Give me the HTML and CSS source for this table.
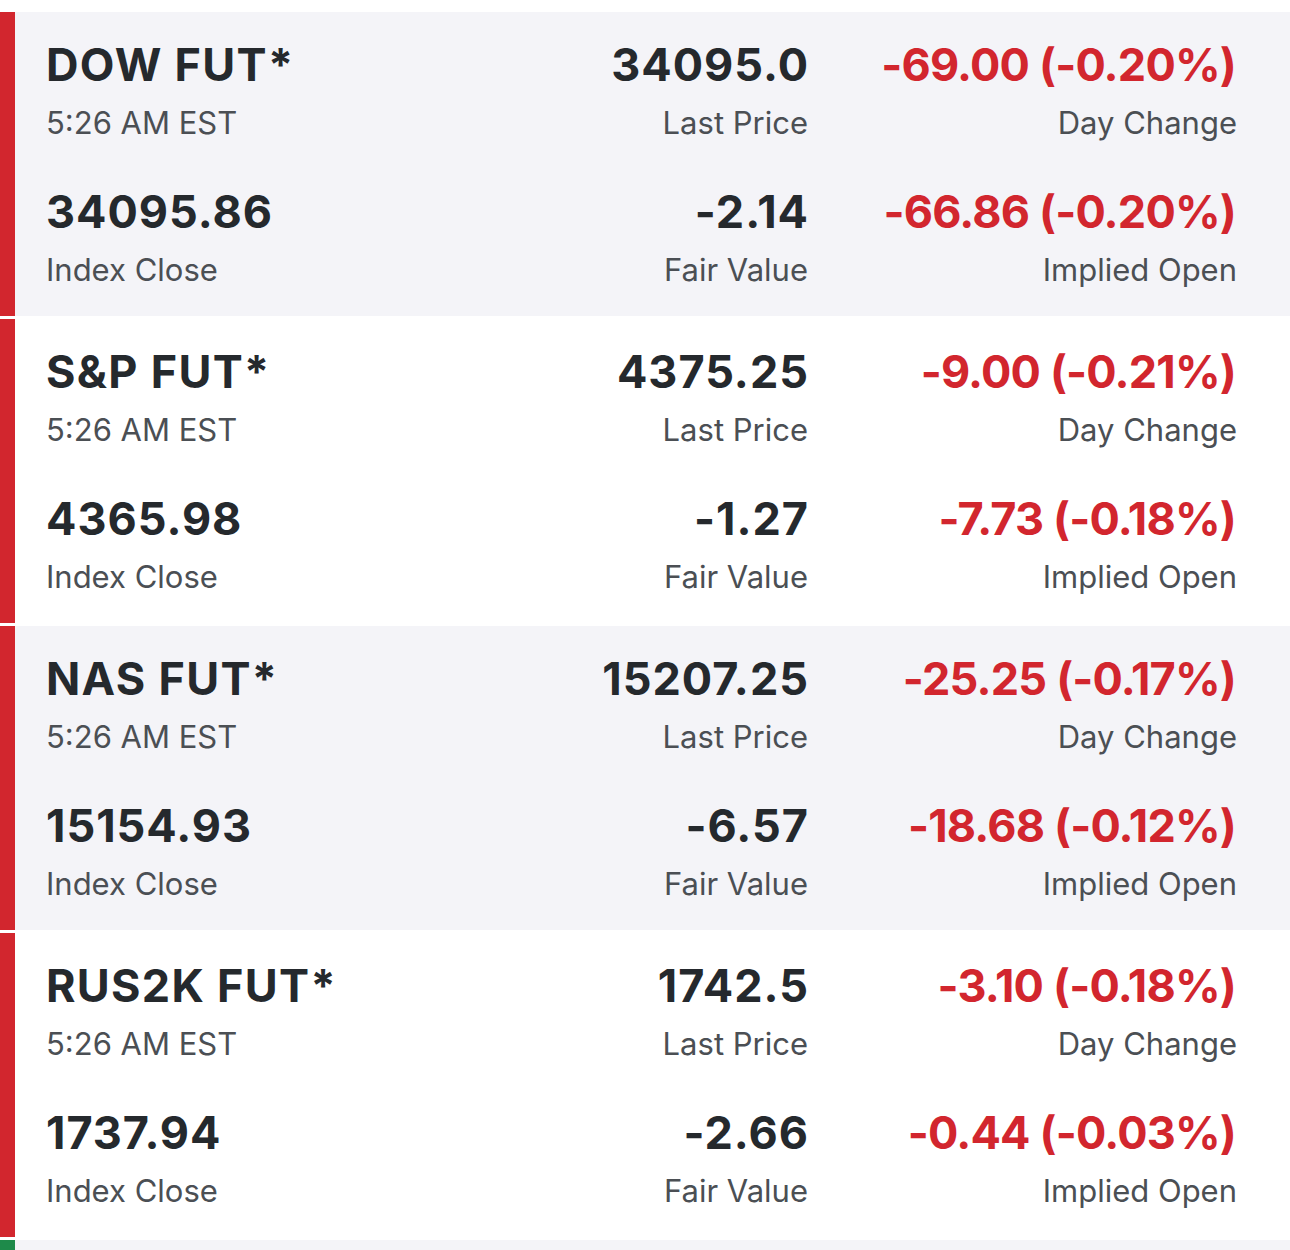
FILE: index.html
```html
<!DOCTYPE html>
<html>
<head>
<meta charset="utf-8">
<link rel="stylesheet" href="styles.css">
</head>
<body>
<div class="list">
  <section class="fut gray down">
    <div class="grid">
      <div class="cell"><div class="big name">DOW FUT*</div><div class="lbl">5:26 AM EST</div></div>
      <div class="cell r"><div class="big num">34095.0</div><div class="lbl">Last Price</div></div>
      <div class="cell r"><div class="big neg">-69.00 (-0.20%)</div><div class="lbl">Day Change</div></div>
      <div class="cell"><div class="big num">34095.86</div><div class="lbl">Index Close</div></div>
      <div class="cell r"><div class="big num">-2.14</div><div class="lbl">Fair Value</div></div>
      <div class="cell r"><div class="big neg">-66.86 (-0.20%)</div><div class="lbl">Implied Open</div></div>
    </div>
  </section>
  <section class="fut down">
    <div class="grid">
      <div class="cell"><div class="big name">S&amp;P FUT*</div><div class="lbl">5:26 AM EST</div></div>
      <div class="cell r"><div class="big num">4375.25</div><div class="lbl">Last Price</div></div>
      <div class="cell r"><div class="big neg">-9.00 (-0.21%)</div><div class="lbl">Day Change</div></div>
      <div class="cell"><div class="big num">4365.98</div><div class="lbl">Index Close</div></div>
      <div class="cell r"><div class="big num">-1.27</div><div class="lbl">Fair Value</div></div>
      <div class="cell r"><div class="big neg">-7.73 (-0.18%)</div><div class="lbl">Implied Open</div></div>
    </div>
  </section>
  <section class="fut gray down">
    <div class="grid">
      <div class="cell"><div class="big name">NAS FUT*</div><div class="lbl">5:26 AM EST</div></div>
      <div class="cell r"><div class="big num">15207.25</div><div class="lbl">Last Price</div></div>
      <div class="cell r"><div class="big neg">-25.25 (-0.17%)</div><div class="lbl">Day Change</div></div>
      <div class="cell"><div class="big num">15154.93</div><div class="lbl">Index Close</div></div>
      <div class="cell r"><div class="big num">-6.57</div><div class="lbl">Fair Value</div></div>
      <div class="cell r"><div class="big neg">-18.68 (-0.12%)</div><div class="lbl">Implied Open</div></div>
    </div>
  </section>
  <section class="fut down">
    <div class="grid">
      <div class="cell"><div class="big name">RUS2K FUT*</div><div class="lbl">5:26 AM EST</div></div>
      <div class="cell r"><div class="big num">1742.5</div><div class="lbl">Last Price</div></div>
      <div class="cell r"><div class="big neg">-3.10 (-0.18%)</div><div class="lbl">Day Change</div></div>
      <div class="cell"><div class="big num">1737.94</div><div class="lbl">Index Close</div></div>
      <div class="cell r"><div class="big num">-2.66</div><div class="lbl">Fair Value</div></div>
      <div class="cell r"><div class="big neg">-0.44 (-0.03%)</div><div class="lbl">Implied Open</div></div>
    </div>
  </section>
  <section class="fut gray up stub"></section>
</div>
</body>
</html>
```

FILE: styles.css
```css
html, body {
  margin: 0;
  padding: 0;
  background: #ffffff;
}
body {
  font-family: Inter, Lato, "Liberation Sans", sans-serif;
  color: #25292d;
  padding-top: 12px;
}
.list {
  display: flex;
  flex-direction: column;
  gap: 3px;
}
.fut {
  border-left: 15px solid #d2262e;
  background: #ffffff;
  height: 304px;
  box-sizing: border-box;
}
.fut.gray { background: #f4f4f8; }
.fut.up { border-left-color: #1e8a4a; }
.fut.stub { height: 20px; }
.grid {
  display: grid;
  grid-template-columns: 1fr 300px 429px;
  row-gap: 43px;
  padding: 27px 53px 26px 31px;
}
.cell.r { text-align: right; }
.big {
  font-size: 45px;
  line-height: 52px;
  font-weight: 700;
  white-space: nowrap;
}
.big.name { letter-spacing: 1.3px; }
.big.num { letter-spacing: 1px; }
.cell.r .big.num { margin-right: -1px; }
.big.neg {
  color: #d2262e;
  letter-spacing: -0.8px;
  margin-right: 1px;
}
.lbl {
  font-size: 31px;
  line-height: 40px;
  margin-top: 12px;
  color: #4b4f54;
  white-space: nowrap;
}
```
